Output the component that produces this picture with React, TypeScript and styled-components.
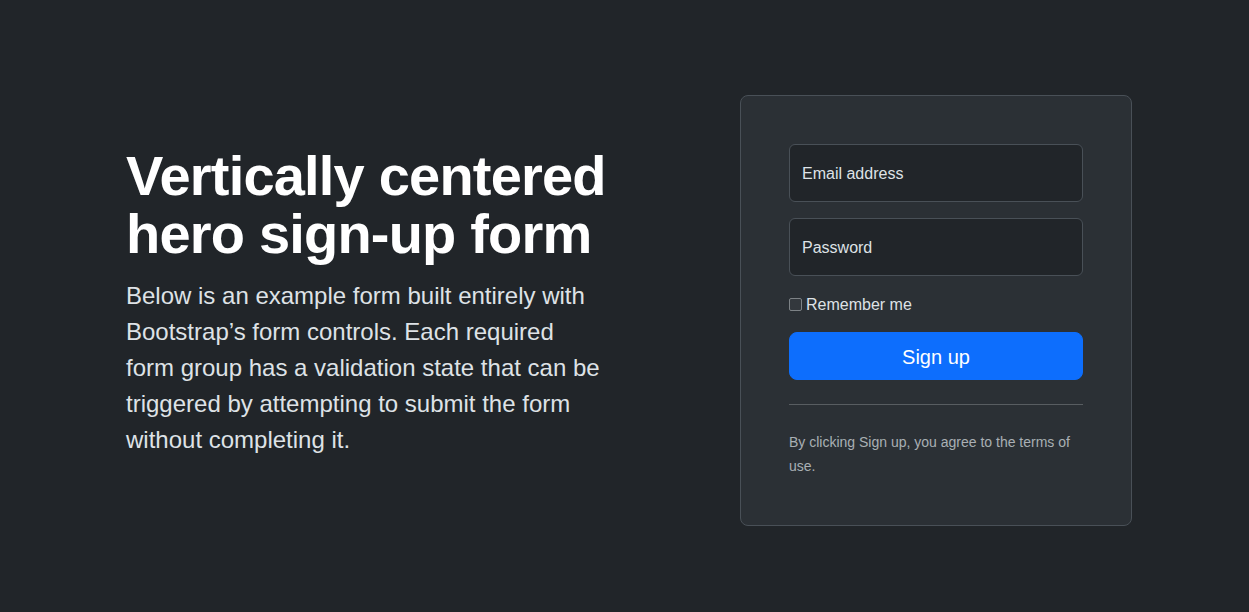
import React from "react";
import styled, { createGlobalStyle } from "styled-components";

const GlobalStyle = createGlobalStyle`
  html, body {
    margin: 0;
    padding: 0;
    background: #212529;
    color: #dee2e6;
    font-family: "Liberation Sans", Arial, sans-serif;
    font-size: 16px;
    line-height: 1.5;
  }
  * { box-sizing: border-box; }
`;

const Page = styled.main`
  min-height: 612px;
  padding: 95px 0 0 126px;
`;

const Row = styled.div`
  display: grid;
  grid-template-columns: 561px 392px;
  column-gap: 53px;
  align-items: center;
`;

const Intro = styled.div`
  display: flex;
  flex-direction: column;
`;

const Title = styled.h1`
  margin: 0 0 16px;
  font-size: 56px;
  font-weight: 700;
  line-height: 1.02;
  letter-spacing: -0.8px;
  color: #ffffff;
`;

const Lead = styled.p`
  margin: 0 0 16px;
  width: 482px;
  font-size: 24px;
  line-height: 1.5;
  color: #dee2e6;
`;

const Card = styled.form`
  display: flex;
  flex-direction: column;
  padding: 48px;
  background: #2b3035;
  border: 1px solid #495057;
  border-radius: 8px;
`;

const Field = styled.div`
  position: relative;
  margin-bottom: 16px;
`;

const Input = styled.input`
  display: block;
  width: 100%;
  height: 58px;
  padding: 16px 12px;
  background: #212529;
  border: 1px solid #495057;
  border-radius: 6px;
  color: #dee2e6;
  font: inherit;
  outline: none;
  &::placeholder { color: transparent; }
`;

const FloatLabel = styled.label`
  position: absolute;
  top: 0;
  left: 0;
  padding: 18px 13px 16px;
  font-size: 16px;
  line-height: 1.5;
  color: #dee2e6;
  pointer-events: none;
`;

const CheckRow = styled.label`
  display: flex;
  align-items: center;
  height: 24px;
  padding-top: 1px;
  margin-bottom: 16px;
  font-size: 16px;
  line-height: 24px;
  color: #dee2e6;
`;

const Check = styled.input`
  appearance: none;
  width: 13px;
  height: 13px;
  margin: 0 4px 0 0;
  background: #33383d;
  border: 1px solid #7d8286;
  border-radius: 2px;
`;

const Button = styled.button`
  width: 100%;
  height: 48px;
  padding: 9px 16px 7px;
  background: #0d6efd;
  border: 1px solid #0d6efd;
  border-radius: 8px;
  color: #ffffff;
  font-family: inherit;
  font-size: 20px;
  line-height: 1.5;
  cursor: pointer;
`;

const Rule = styled.hr`
  margin: 24px 0;
  border: 0;
  border-top: 1px solid rgba(222, 226, 230, 0.25);
`;

const TermsBox = styled.div`
  padding-top: 1px;
  height: 48px;
`;

const Terms = styled.small`
  font-size: 14px;
  color: rgba(222, 226, 230, 0.72);
`;

export default function App() {
  return (
    <>
      <GlobalStyle />
      <Page>
        <Row>
          <Intro>
            <Title>
              Vertically centered
              <br />
              hero sign-up form
            </Title>
            <Lead>
              Below is an example form built entirely with Bootstrap’s form
              controls. Each required form group has a validation state that
              can be triggered by attempting to submit the form without
              completing it.
            </Lead>
          </Intro>
          <Card onSubmit={(e) => e.preventDefault()}>
            <Field>
              <Input id="email" type="email" placeholder="name@example.com" />
              <FloatLabel htmlFor="email">Email address</FloatLabel>
            </Field>
            <Field>
              <Input id="password" type="password" placeholder="Password" />
              <FloatLabel htmlFor="password">Password</FloatLabel>
            </Field>
            <CheckRow>
              <Check type="checkbox" value="remember-me" />
              Remember me
            </CheckRow>
            <Button type="submit">Sign up</Button>
            <Rule />
            <TermsBox>
              <Terms>By clicking Sign up, you agree to the terms of use.</Terms>
            </TermsBox>
          </Card>
        </Row>
      </Page>
    </>
  );
}
